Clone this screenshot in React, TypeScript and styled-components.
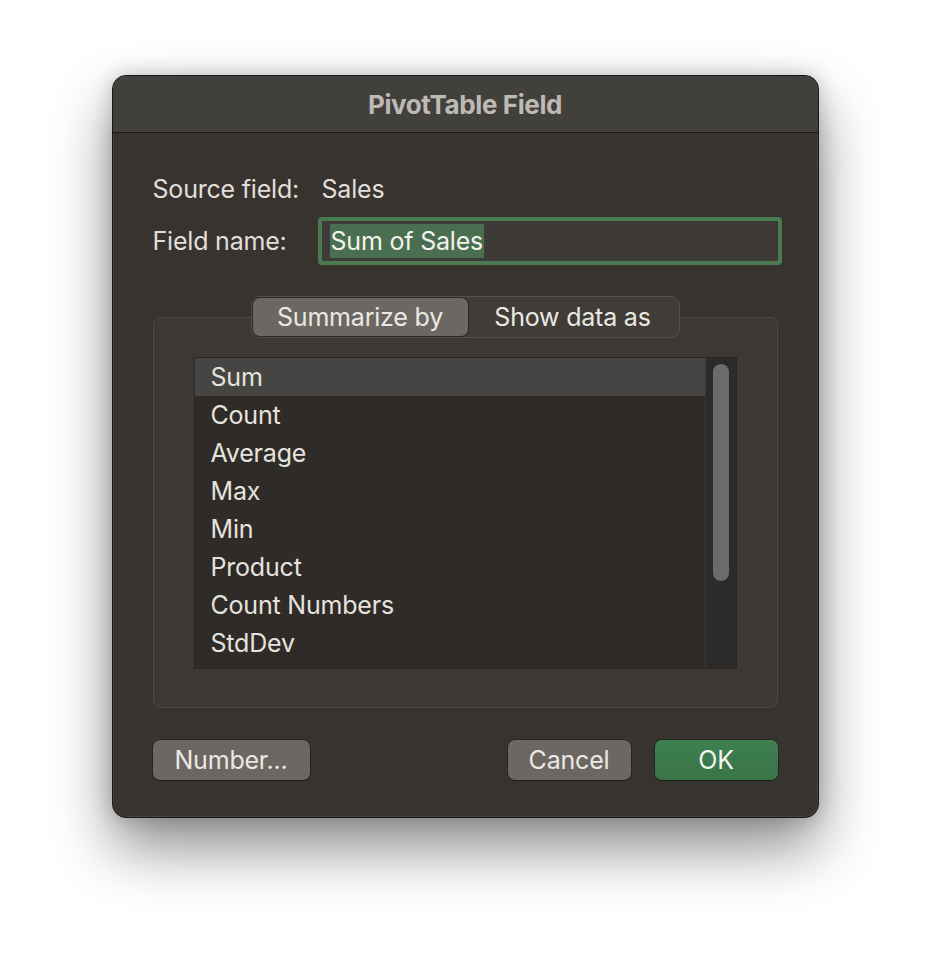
import React from "react";
import styled, { createGlobalStyle } from "styled-components";

const GlobalStyle = createGlobalStyle`
	html, body {
		margin: 0;
		padding: 0;
		background: #ffffff;
	}
	body {
		font-family: Inter, "Noto Sans", "Liberation Sans", sans-serif;
	}
`;

const Page = styled.div`
	width: 930px;
	height: 966px;
	display: flex;
	justify-content: center;
	align-items: flex-start;
	padding-top: 75px;
	box-sizing: border-box;
`;

const Window = styled.div`
	width: 707px;
	height: 743px;
	box-sizing: border-box;
	border-radius: 14px;
	background: #37332f;
	border: 1px solid #1a1816;
	box-shadow: 0 0 0 1px rgba(255, 255, 255, 0.08) inset,
		0 30px 60px rgba(0, 0, 0, 0.45), 0 0 20px rgba(0, 0, 0, 0.2);
	overflow: hidden;
	display: flex;
	flex-direction: column;
`;

const TitleBar = styled.div`
	height: 56px;
	flex-shrink: 0;
	display: flex;
	align-items: center;
	justify-content: center;
	background: #42403c;
	border-bottom: 1px solid #1c1a18;
	color: #bdbab5;
	font-size: 26px;
	font-weight: 700;
	letter-spacing: -0.4px;
`;

const Body = styled.div`
	flex: 1;
	padding: 42px 40px 0 40px;
	display: flex;
	flex-direction: column;
	color: #e2dfda;
	font-size: 25px;
	letter-spacing: -0.2px;
`;

const InfoRow = styled.div`
	display: flex;
	align-items: center;
	height: 28px;
`;

const Label = styled.span`
	width: 169px;
	flex-shrink: 0;
`;

const FieldRow = styled.div`
	display: flex;
	align-items: center;
	margin-top: 14px;
	height: 48px;
`;

const FieldLabel = styled.span`
	width: 165px;
	flex-shrink: 0;
`;

const FieldInput = styled.div`
	flex: 1;
	height: 48px;
	margin-right: -4px;
	box-sizing: border-box;
	border: 4px solid #4a7a52;
	border-radius: 4px;
	background: #3d3a37;
	display: flex;
	align-items: center;
	padding-left: 8px;
`;

const Selection = styled.span`
	background: #4a6f50;
	color: #f2f2ee;
	line-height: 34px;
	padding: 0 1px;
`;

const GroupWrap = styled.div`
	margin-top: 31px;
	display: flex;
	flex-direction: column;
	align-items: center;
`;

const Segmented = styled.div`
	display: flex;
	height: 42px;
	box-sizing: border-box;
	border: 1px solid #55514d;
	border-radius: 9px;
	background: #403c38;
	padding: 1px;
	position: relative;
	z-index: 1;
	margin-bottom: -21px;
`;

const Segment = styled.div<{ $active?: boolean }>`
	width: ${(p) => (p.$active ? 215 : 210)}px;
	display: flex;
	align-items: center;
	justify-content: center;
	border-radius: 7px;
	background: ${(p) => (p.$active ? "#6b6864" : "transparent")};
	box-shadow: ${(p) =>
		p.$active ? "0 0 0 1px #2a2826, 0 1px 1px rgba(0,0,0,0.3)" : "none"};
	color: #ebe8e3;
`;

const GroupBox = styled.div`
	align-self: stretch;
	height: 391px;
	box-sizing: border-box;
	border: 1px solid #4d4945;
	border-radius: 8px;
	background: #3c3834;
	padding: 39px 40px 0 40px;
`;

const List = styled.div`
	display: flex;
	height: 310px;
	border: 1px solid #2a2826;
	background: #2f2b28;
`;

const Items = styled.div`
	flex: 1;
	display: flex;
	flex-direction: column;
	border-right: 1px solid #3a3836;
`;

const Item = styled.div<{ $selected?: boolean }>`
	height: 38px;
	flex-shrink: 0;
	display: flex;
	align-items: center;
	padding-left: 16px;
	background: ${(p) => (p.$selected ? "#474543" : "transparent")};
	color: #e6e3de;
`;

const Track = styled.div`
	width: 30px;
	background: #2c2b2a;
	padding: 6px 7px;
	box-sizing: border-box;
`;

const Thumb = styled.div`
	width: 16px;
	height: 217px;
	border-radius: 8px;
	background: #6c6b69;
`;

const Footer = styled.div`
	margin-top: 32px;
	display: flex;
	align-items: center;
	gap: 24px;
`;

const Button = styled.button<{ $primary?: boolean; $width: number }>`
	width: ${(p) => p.$width}px;
	height: 40px;
	border: none;
	border-radius: 7px;
	font-family: inherit;
	font-size: 25px;
	letter-spacing: -0.2px;
	color: ${(p) => (p.$primary ? "#f2f5f0" : "#ebe8e3")};
	background: ${(p) =>
		p.$primary
			? "linear-gradient(#3f8050, #387447)"
			: "#6b6763"};
	box-shadow: 0 0 0 0.5px rgba(0, 0, 0, 0.5), 0 1px 1px rgba(0, 0, 0, 0.25);
	padding: 0;
`;

const Spacer = styled.div`
	flex: 1;
`;

const functions = [
	"Sum",
	"Count",
	"Average",
	"Max",
	"Min",
	"Product",
	"Count Numbers",
	"StdDev",
];

export default function App() {
	return (
		<>
			<GlobalStyle />
			<Page>
				<Window>
					<TitleBar>PivotTable Field</TitleBar>
					<Body>
						<InfoRow>
							<Label>Source field:</Label>
							<span>Sales</span>
						</InfoRow>
						<FieldRow>
							<FieldLabel>Field name:</FieldLabel>
							<FieldInput>
								<Selection>Sum of Sales</Selection>
							</FieldInput>
						</FieldRow>
						<GroupWrap>
							<Segmented>
								<Segment $active>Summarize by</Segment>
								<Segment>Show data as</Segment>
							</Segmented>
							<GroupBox>
								<List>
									<Items>
										{functions.map((f, i) => (
											<Item key={f} $selected={i === 0}>
												{f}
											</Item>
										))}
									</Items>
									<Track>
										<Thumb />
									</Track>
								</List>
							</GroupBox>
						</GroupWrap>
						<Footer>
							<Button $width={157}>Number...</Button>
							<Spacer />
							<Button $width={123}>Cancel</Button>
							<Button $width={123} $primary>
								OK
							</Button>
						</Footer>
					</Body>
				</Window>
			</Page>
		</>
	);
}
